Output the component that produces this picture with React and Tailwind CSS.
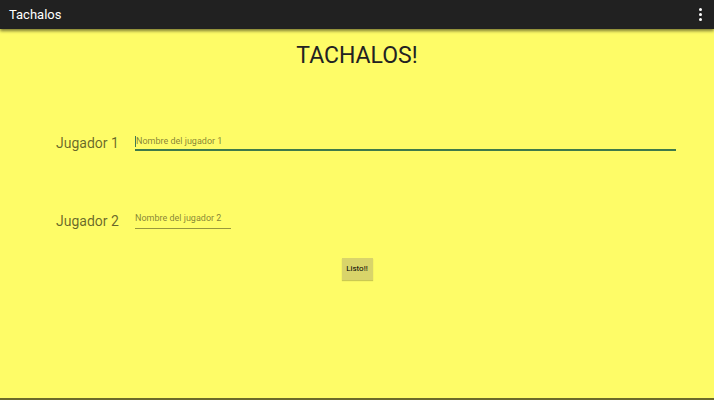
export default function App() {
  return (
    <div className="w-[714px] h-[400px] flex flex-col bg-[#fefc67] overflow-hidden" style={{ fontFamily: 'Roboto, "Noto Sans", sans-serif' }}>
      <div className="h-[29px] shrink-0 bg-[#212121] flex items-center justify-between pl-[9px] pr-[12px] shadow-[0_2px_3px_rgba(0,0,0,0.5)] relative z-10">
        <span className="text-white text-[13px] leading-none">Tachalos</span>
        <div className="flex flex-col gap-[2px]">
          <div className="w-[3px] h-[3px] bg-white rounded-full"></div>
          <div className="w-[3px] h-[3px] bg-white rounded-full"></div>
          <div className="w-[3px] h-[3px] bg-white rounded-full"></div>
        </div>
      </div>
      <div className="flex-1 flex flex-col relative">
        <div className="text-center text-[23px] leading-none text-[#222] mt-[15px] font-normal">TACHALOS!</div>
        <div className="flex items-end mt-[67px] pl-[56px] pr-[38px]">
          <span className="text-[14px] leading-none text-[rgba(0,0,0,0.6)] w-[79px] mb-[1px]">Jugador 1</span>
          <div className="flex-1 flex flex-col">
            <div className="flex items-center h-[14px] mb-[1px]">
              <div className="w-[1px] h-[11px] bg-[#3b7a57]"></div>
              <span className="text-[9px] text-[rgba(0,0,0,0.5)] leading-none">Nombre del jugador 1</span>
            </div>
            <div className="h-[2px] bg-[#3f7a4a]"></div>
          </div>
        </div>
        <div className="flex items-end mt-[58px] pl-[56px]">
          <span className="text-[14px] leading-none text-[rgba(0,0,0,0.6)] w-[79px] mb-[1px]">Jugador 2</span>
          <div className="w-[96px] flex flex-col">
            <div className="flex items-center h-[18px] mb-[1px]">
              <span className="text-[9px] text-[rgba(0,0,0,0.5)] leading-none">Nombre del jugador 2</span>
            </div>
            <div className="h-[1px] bg-[rgba(0,0,0,0.4)]"></div>
          </div>
        </div>
        <div className="flex justify-center mt-[29px]">
          <button className="w-[31px] h-[22px] bg-[#d9d46a] text-[8px] font-normal text-black leading-none shadow-[0_1px_1px_rgba(0,0,0,0.2)]">Listo!!</button>
        </div>
        <div className="absolute bottom-0 left-0 right-0 h-[2px] bg-[#6b6a2a]"></div>
      </div>
    </div>
  );
}
